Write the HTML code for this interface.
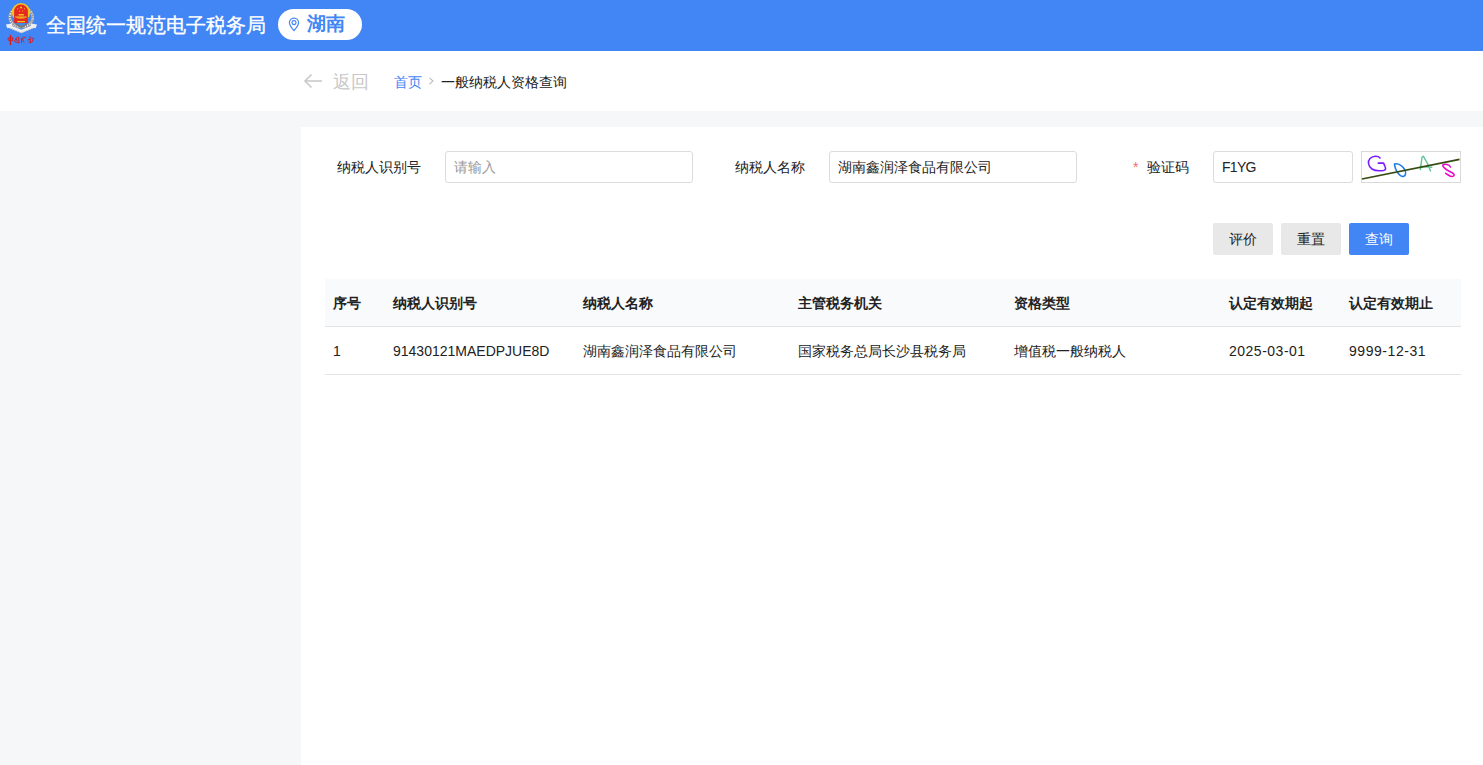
<!DOCTYPE html>
<html><head><meta charset="utf-8">
<style>
*{margin:0;padding:0;box-sizing:border-box}
html,body{width:1483px;height:765px;overflow:hidden;background:#f6f7f9;font-family:"Liberation Sans",sans-serif;color:#333}
.abs{position:absolute}
#hdr{position:absolute;left:0;top:0;width:1483px;height:51px;background:#4285f4}
#title{position:absolute;left:46px;top:10.5px;font-size:20px;line-height:28px;color:#fff;white-space:nowrap;-webkit-text-stroke:0.35px #fff}
#pill{position:absolute;left:278px;top:9px;width:84px;height:31px;border-radius:16px;background:#fff}
#pill span{position:absolute;left:29px;top:1.4px;font-size:19px;line-height:28px;color:#4285f4;font-weight:bold}
#crumbbar{position:absolute;left:0;top:51px;width:1483px;height:60px;background:#fff}
#back{position:absolute;left:333px;top:69px;font-size:18px;line-height:26px;color:#c8c8c8}
.bc{position:absolute;top:72px;font-size:14px;line-height:20px;white-space:nowrap}
#content{position:absolute;left:301px;top:127px;width:1182px;height:638px;background:#fff}
.lbl{position:absolute;font-size:14px;line-height:20px;color:#222;white-space:nowrap}
.inp{position:absolute;top:151px;height:32px;border:1px solid #dcdcdc;border-radius:3px;background:#fff}
.inp span{position:absolute;left:8px;top:5px;font-size:14px;line-height:20px;white-space:nowrap}
.btn{position:absolute;top:223px;width:60px;height:32px;border-radius:2px;background:#e8e8e8;font-size:14px;line-height:32px;text-align:center;color:#222}
#thead{position:absolute;left:325px;top:279px;width:1136px;height:48px;background:#f9fafc;border-bottom:1px solid #e3e3e3}
#trow{position:absolute;left:325px;top:327px;width:1136px;height:48px;border-bottom:1px solid #e3e3e3}
.th{position:absolute;top:293px;font-size:14px;line-height:20px;font-weight:bold;color:#222;white-space:nowrap}
.td{position:absolute;top:341px;font-size:14px;line-height:20px;color:#222;white-space:nowrap}
</style></head><body>
<div id="hdr">
  <svg class="abs" style="left:0;top:0" width="44" height="50" viewBox="0 0 44 50">
    <ellipse cx="21.3" cy="17.3" rx="11.5" ry="9.8" fill="none" stroke="#a3a3a3" stroke-width="2.8"/>
    <ellipse cx="21.3" cy="17.3" rx="11.5" ry="9.8" fill="none" stroke="#f0f0f0" stroke-width="1.6" stroke-dasharray="1.3 1.1"/>
    <ellipse cx="21.3" cy="17.3" rx="11.5" ry="9.8" fill="none" stroke="#4a4a4a" stroke-width="1" stroke-dasharray="0.8 1.9"/>
    <path d="M16 24 L21.4 27.2 L26.8 24" fill="none" stroke="#777" stroke-width="1.6"/>
    <circle cx="21" cy="12.3" r="9.2" fill="#f4c51c"/>
    <path d="M14.1 11.3 A6.9 6.9 0 0 1 27.9 11.3 L27.9 23 L14.1 23 Z" fill="#e52822"/>
    <circle cx="21" cy="7.5" r="1.1" fill="#f4c51c"/>
    <circle cx="17.6" cy="8.8" r="0.65" fill="#f4c51c"/><circle cx="24.4" cy="8.8" r="0.65" fill="#f4c51c"/>
    <circle cx="19.5" cy="11" r="0.6" fill="#f4c51c"/><circle cx="22.6" cy="11" r="0.6" fill="#f4c51c"/>
    <path d="M18.6 14.1 H23.8 V15.5 H18.6 Z M15 16.6 H27 L26.4 17.6 A6 2.6 0 0 1 15.6 17.6 Z M17.2 21.1 H25 V22.2 H17.2 Z" fill="#f4c51c"/>
    <path d="M16.5 17.4 A5 1.6 0 0 0 25.5 17.4" fill="none" stroke="#e52822" stroke-width="0.6"/>
    <path d="M8.5 26.2 L21.4 31.4 L34.3 26.2" fill="none" stroke="#f0f0f0" stroke-width="2.9" stroke-linejoin="round"/>
    <path d="M9 27.6 L21.4 32.8 L33.8 27.6" fill="none" stroke="#c8c8c8" stroke-width="0.8"/>
    <path d="M5.9 24.6 L11.8 23.6 L12.6 26.9 L7.3 28.2 Z M37 24.6 L31.1 23.6 L30.3 26.9 L35.6 28.2 Z" fill="#eeeeee"/>
    <g fill="none" stroke="#dc1a1a" stroke-linecap="round" stroke-linejoin="round">
      <path d="M10.5 35.4 L10.4 44.6" stroke-width="1.3"/>
      <path d="M8.4 38 Q10.5 37.2 12.9 37.8 L12.6 40.4 L8.6 40.2 Z" stroke-width="1"/>
      <path d="M14.5 40.6 C15.4 39.2 16.6 38.2 17.4 37.1 M14.8 41.6 L18.2 42.6 M18.6 37.2 L18.9 43 M16.3 38.8 L17 40.6" stroke-width="0.95"/>
      <path d="M21.3 38.4 L21.5 42.6 M23.2 37.2 L22.7 40 L23.9 42 M24.1 37.6 L25.6 37.1" stroke-width="0.95"/>
      <path d="M27.6 40 C28.6 39 29.6 39.4 30.6 39.8 M29.9 36.6 L30.5 42.8 M31.6 38 L33.6 38.6 L32.1 41.8 M28.9 42 L31 42.5" stroke-width="0.95"/>
    </g>
  </svg>
  <div id="title">全国统一规范电子税务局</div>
  <div id="pill">
    <svg class="abs" style="left:10px;top:8px" width="12" height="15" viewBox="0 0 12 15">
      <path d="M6 13.6 C3.2 10.3 1.4 8 1.4 5.7 A4.6 4.6 0 0 1 10.6 5.7 C10.6 8 8.8 10.3 6 13.6 Z" fill="none" stroke="#4285f4" stroke-width="1.2"/>
      <circle cx="6" cy="5.6" r="2" fill="none" stroke="#4285f4" stroke-width="1.1"/>
    </svg>
    <span>湖南</span>
  </div>
</div>
<div id="crumbbar"></div>
<svg class="abs" style="left:302px;top:72px" width="22" height="18" viewBox="0 0 22 18">
  <path d="M3 9 H20 M9.5 2.5 L3 9 L9.5 15.5" fill="none" stroke="#c8c8c8" stroke-width="1.6"/>
</svg>
<div id="back">返回</div>
<div class="bc" style="left:394px;color:#4285f4">首页</div>
<svg class="abs" style="left:428px;top:77px" width="7" height="8" viewBox="0 0 7 8"><path d="M1.5 0.8 L5 4 L1.5 7.2" fill="none" stroke="#bbb" stroke-width="1.1"/></svg>
<div class="bc" style="left:441px;color:#222">一般纳税人资格查询</div>

<div id="content"></div>

<div class="lbl" style="left:337px;top:157px">纳税人识别号</div>
<div class="inp" style="left:445px;width:248px"><span style="color:#999;left:8px">请输入</span></div>
<div class="lbl" style="left:735px;top:157px">纳税人名称</div>
<div class="inp" style="left:829px;width:248px"><span style="color:#222">湖南鑫润泽食品有限公司</span></div>
<div class="lbl" style="left:1133px;top:157px;color:#f56c6c">*</div>
<div class="lbl" style="left:1147px;top:157px">验证码</div>
<div class="inp" style="left:1213px;width:140px"><span style="color:#222;letter-spacing:-0.7px">F1YG</span></div>
<svg class="abs" style="left:1361px;top:151px" width="100" height="32" viewBox="0 0 100 32">
  <rect x="0.5" y="0.5" width="99" height="31" fill="#fff" stroke="#d9d9d9"/>
  <path d="M19 6.9 C17 4.5, 12 4.7, 9 7.5 C6.5 10, 7 15.5, 11 18 C14 20, 19 20, 22.5 19.5 C25 19, 25 17.5, 24 15.5 L22.6 12.1 L17.2 12.1" fill="none" stroke="#7a1cff" stroke-width="1.6" stroke-linecap="round" stroke-linejoin="round"/>
  <path d="M33.5 13 C36 12, 40 13.5, 43 17.5 C46 21.5, 44.5 25.8, 41.5 25.5 C38.5 25, 35.5 20.5, 34.5 17.5 C34 16, 33.3 14, 33.5 13 Z" fill="none" stroke="#1f7ae8" stroke-width="1.6"/>
  <path d="M59.3 19.2 L60.5 10 L61 6.3 L62.3 5.2 L66.5 12.5 L69.7 20.5 M58.8 15.5 L71.3 16.3" fill="none" stroke="#5cc595" stroke-width="1.4" stroke-linejoin="round"/>
  <path d="M89.5 16 C88.5 13.5, 84 12.5, 82 13.8 C81 15, 83 17, 86 19 C89 21, 93 22, 93.2 24 C93 26, 90 25.8, 88 24.5 L84.7 22.3" fill="none" stroke="#e80bc3" stroke-width="1.6" stroke-linecap="round"/>
  <path d="M1 28 L98.5 8.4" stroke="#354a10" stroke-width="1.7"/>
</svg>

<div class="btn" style="left:1213px">评价</div>
<div class="btn" style="left:1281px">重置</div>
<div class="btn" style="left:1349px;background:#4285f4;color:#fff">查询</div>

<div id="thead"></div>
<div id="trow"></div>
<div class="th" style="left:333px">序号</div>
<div class="th" style="left:393px">纳税人识别号</div>
<div class="th" style="left:583px">纳税人名称</div>
<div class="th" style="left:798px">主管税务机关</div>
<div class="th" style="left:1014px">资格类型</div>
<div class="th" style="left:1229px">认定有效期起</div>
<div class="th" style="left:1349px">认定有效期止</div>
<div class="td" style="left:333px">1</div>
<div class="td" style="left:393px">91430121MAEDPJUE8D</div>
<div class="td" style="left:583px">湖南鑫润泽食品有限公司</div>
<div class="td" style="left:798px">国家税务总局长沙县税务局</div>
<div class="td" style="left:1014px">增值税一般纳税人</div>
<div class="td" style="left:1229px;letter-spacing:0.5px">2025-03-01</div>
<div class="td" style="left:1349px;letter-spacing:0.55px">9999-12-31</div>
</body></html>
